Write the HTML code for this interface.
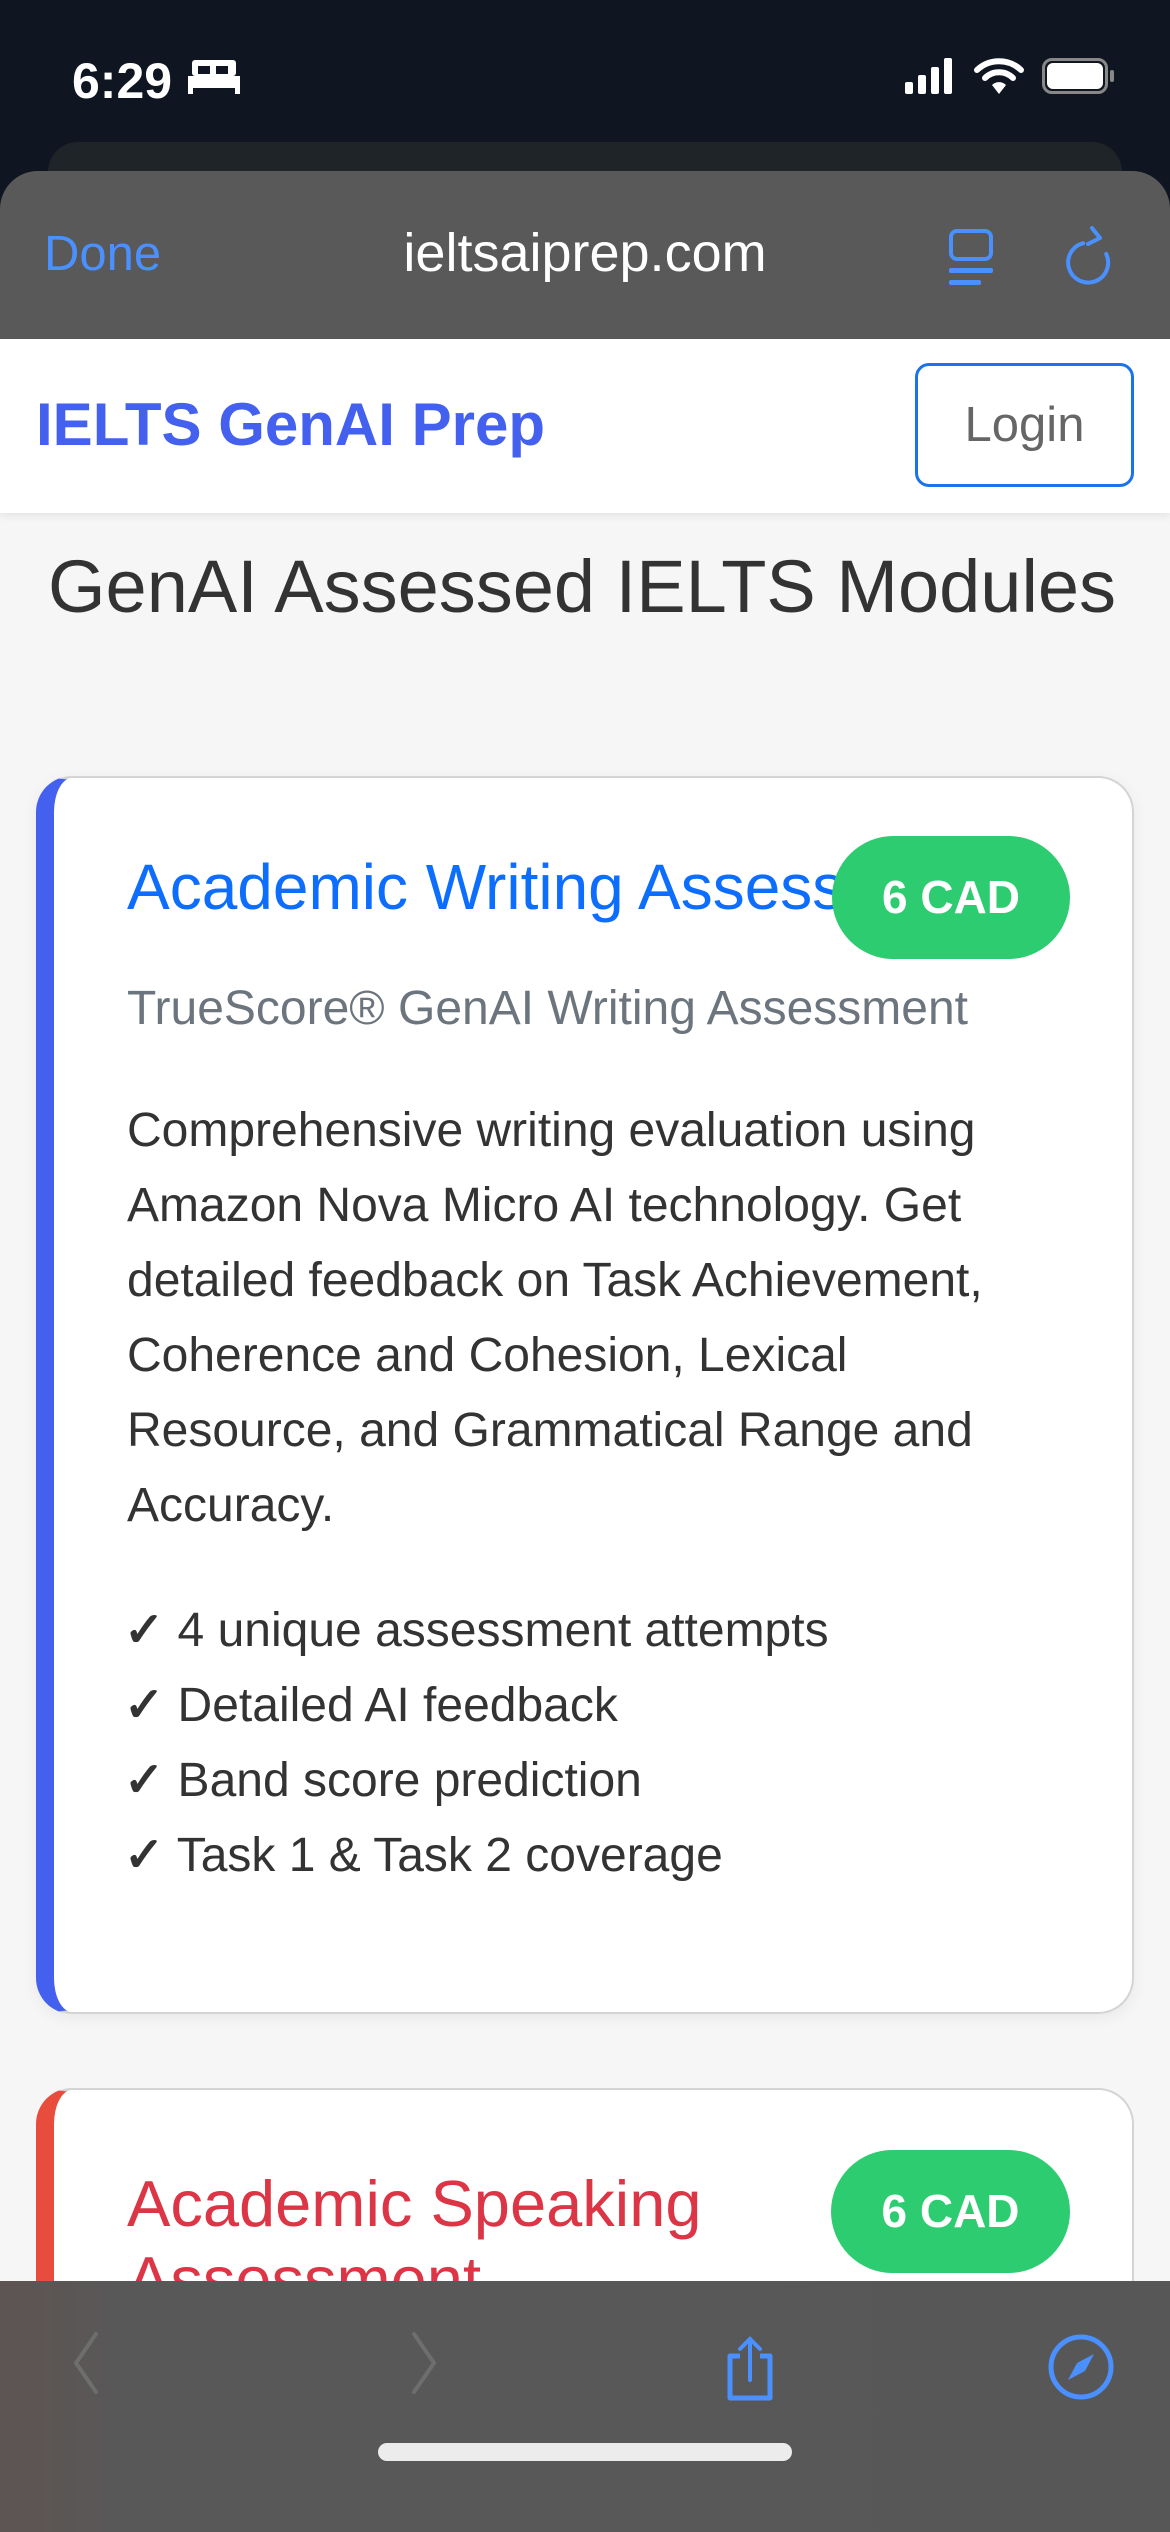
<!DOCTYPE html>
<html><head><meta charset="utf-8"><style>
*{margin:0;padding:0;box-sizing:border-box}
body{width:1170px;height:2532px;overflow:hidden;background:#f6f6f6;font-family:"Liberation Sans",Arial,sans-serif;position:relative}
.abs{position:absolute;white-space:nowrap}
</style></head><body>
<div class="abs" style="left:0;top:0;width:1170px;height:300px;background:#0f1622"></div>
<div class="abs" style="left:72px;top:52px;color:#fff;font-size:50px;font-weight:600">6:29</div>
<svg class="abs" style="left:188px;top:58px" width="52" height="38" viewBox="0 0 52 38"><rect x="4" y="2" width="44" height="16" rx="3" fill="#fff"/><rect x="10" y="8" width="12" height="8" fill="#0f1622"/><rect x="28" y="8" width="12" height="8" fill="#0f1622"/><rect x="0" y="18" width="52" height="12" fill="#fff"/><rect x="0" y="28" width="5" height="8" fill="#fff"/><rect x="47" y="28" width="5" height="8" fill="#fff"/></svg>
<svg class="abs" style="left:905px;top:58px" width="52" height="36"><rect x="0" y="24" width="8" height="12" rx="2" fill="#fff"/><rect x="13" y="17" width="8" height="19" rx="2" fill="#fff"/><rect x="26" y="9" width="8" height="27" rx="2" fill="#fff"/><rect x="39" y="0" width="8" height="36" rx="2" fill="#fff"/></svg>
<svg class="abs" style="left:974px;top:56px" width="50" height="40" viewBox="0 0 50 40"><path d="M3 14 A32 32 0 0 1 47 14" stroke="#fff" stroke-width="6" fill="none" stroke-linecap="round"/><path d="M11 22 A20 20 0 0 1 39 22" stroke="#fff" stroke-width="6" fill="none" stroke-linecap="round"/><path d="M18 29 L25 38 L32 29 A10 10 0 0 0 18 29Z" fill="#fff"/></svg>
<div class="abs" style="left:1042px;top:58px;width:66px;height:36px;border:3px solid #888;border-radius:10px"></div>
<div class="abs" style="left:1047px;top:63px;width:56px;height:26px;background:#fff;border-radius:6px"></div>
<div class="abs" style="left:1110px;top:70px;width:4px;height:12px;background:#888;border-radius:2px"></div>
<div class="abs" style="left:48px;top:142px;width:1074px;height:60px;background:#1f2428;border-radius:30px 30px 0 0"></div>
<div class="abs" style="left:0;top:171px;width:1170px;height:170px;background:#595959;border-radius:38px 38px 0 0"></div>
<div class="abs" style="left:44px;top:226px;color:#4a90ff;font-size:49px">Done</div>
<div class="abs" style="left:0;width:1170px;text-align:center;top:222px;color:#fff;font-size:54px;font-weight:500">ieltsaiprep.com</div>
<svg class="abs" style="left:948px;top:228px" width="48" height="60"><rect x="3" y="3" width="40" height="28" rx="6" stroke="#4a90ff" stroke-width="4" fill="none"/><rect x="1" y="40" width="44" height="5" rx="2" fill="#4a90ff"/><rect x="1" y="52" width="32" height="5" rx="2" fill="#4a90ff"/></svg>
<svg class="abs" style="left:1064px;top:224px" width="50" height="64" viewBox="0 0 50 64"><path d="M26 18 A20 20 0 1 0 44 36" stroke="#4a90ff" stroke-width="4" fill="none" stroke-linecap="round" transform="rotate(-20 26 38)"/><path d="M28 4 L36 14 L24 20" stroke="#4a90ff" stroke-width="4" fill="none" stroke-linecap="round" stroke-linejoin="round"/></svg>
<div class="abs" style="left:0;top:339px;width:1170px;height:174px;background:#fff;box-shadow:0 3px 8px rgba(0,0,0,0.08)"></div>
<div class="abs" style="left:36px;top:390px;color:#4361ee;font-size:60px;font-weight:700">IELTS GenAI Prep</div>
<div class="abs" style="left:915px;top:363px;width:219px;height:124px;border:3px solid #1a73e8;border-radius:14px;color:#666;font-size:49px;text-align:center;line-height:118px">Login</div>
<div class="abs" style="left:48px;top:544px;color:#333;font-size:74px">GenAI Assessed IELTS Modules</div>

<div class="abs" style="left:36px;top:776px;width:1098px;height:1238px;background:#fff;border:2px solid #d4d4d4;border-left:18px solid #4361ee;border-radius:36px;box-shadow:0 4px 16px rgba(0,0,0,0.06)"></div>
<div class="abs" style="left:127px;top:850px;color:#0d6efd;font-size:64px;width:720px;overflow:hidden">Academic Writing Assessment</div>
<div class="abs" style="left:832px;top:836px;width:238px;height:123px;background:#2ecc71;border-radius:62px;color:#fff;font-size:46px;font-weight:700;text-align:center;line-height:123px">6 CAD</div>
<div class="abs" style="left:127px;top:981px;color:#6c757d;font-size:48px">TrueScore® GenAI Writing Assessment</div>
<div class="abs" style="left:127px;top:1093px;color:#333;font-size:48px;line-height:75px;white-space:normal;width:960px">Comprehensive writing evaluation using<br>Amazon Nova Micro AI technology. Get<br>detailed feedback on Task Achievement,<br>Coherence and Cohesion, Lexical<br>Resource, and Grammatical Range and<br>Accuracy.</div>
<div class="abs" style="left:124px;top:1593px;color:#333;font-size:48px;line-height:75px;white-space:normal;width:960px"><b>✓</b> 4 unique assessment attempts<br><b>✓</b> Detailed AI feedback<br><b>✓</b> Band score prediction<br><b>✓</b> Task 1 &amp; Task 2 coverage</div>

<div class="abs" style="left:36px;top:2088px;width:1098px;height:400px;background:#fff;border:2px solid #d4d4d4;border-left:18px solid #e74c3c;border-radius:36px"></div>
<div class="abs" style="left:127px;top:2166px;color:#dc3545;font-size:65px;line-height:76px">Academic Speaking<br>Assessment</div>
<div class="abs" style="left:831px;top:2150px;width:239px;height:123px;background:#2ecc71;border-radius:62px;color:#fff;font-size:46px;font-weight:700;text-align:center;line-height:123px">6 CAD</div>

<div class="abs" style="left:0;top:2281px;width:1170px;height:251px;background:linear-gradient(90deg,#5e5453 0,#585858 120px,#575757 100%)"></div>
<svg class="abs" style="left:66px;top:2330px" width="40" height="66"><path d="M30 4 L10 33 L30 62" stroke="#6e6e6e" stroke-width="4" fill="none" stroke-linecap="round"/></svg>
<svg class="abs" style="left:404px;top:2330px" width="40" height="66"><path d="M10 4 L30 33 L10 62" stroke="#6e6e6e" stroke-width="4" fill="none" stroke-linecap="round"/></svg>
<svg class="abs" style="left:720px;top:2336px" width="60" height="68"><path d="M20 20 H10 V62 H50 V20 H40" stroke="#4a90ff" stroke-width="5" fill="none" stroke-linejoin="round"/><path d="M30 44 V3 M20 13 L30 3 L40 13" stroke="#4a90ff" stroke-width="4" fill="none" stroke-linecap="round"/></svg>
<svg class="abs" style="left:1046px;top:2332px" width="70" height="70" viewBox="0 0 70 70"><circle cx="35" cy="35" r="30" stroke="#4a90ff" stroke-width="5" fill="none"/><path d="M48 22 L39 39 L31 31Z" fill="#4a90ff"/><path d="M22 48 L31 31 L39 39Z" fill="#4a90ff"/></svg>
<div class="abs" style="left:378px;top:2443px;width:414px;height:18px;background:#ececec;border-radius:9px"></div>
</body></html>
